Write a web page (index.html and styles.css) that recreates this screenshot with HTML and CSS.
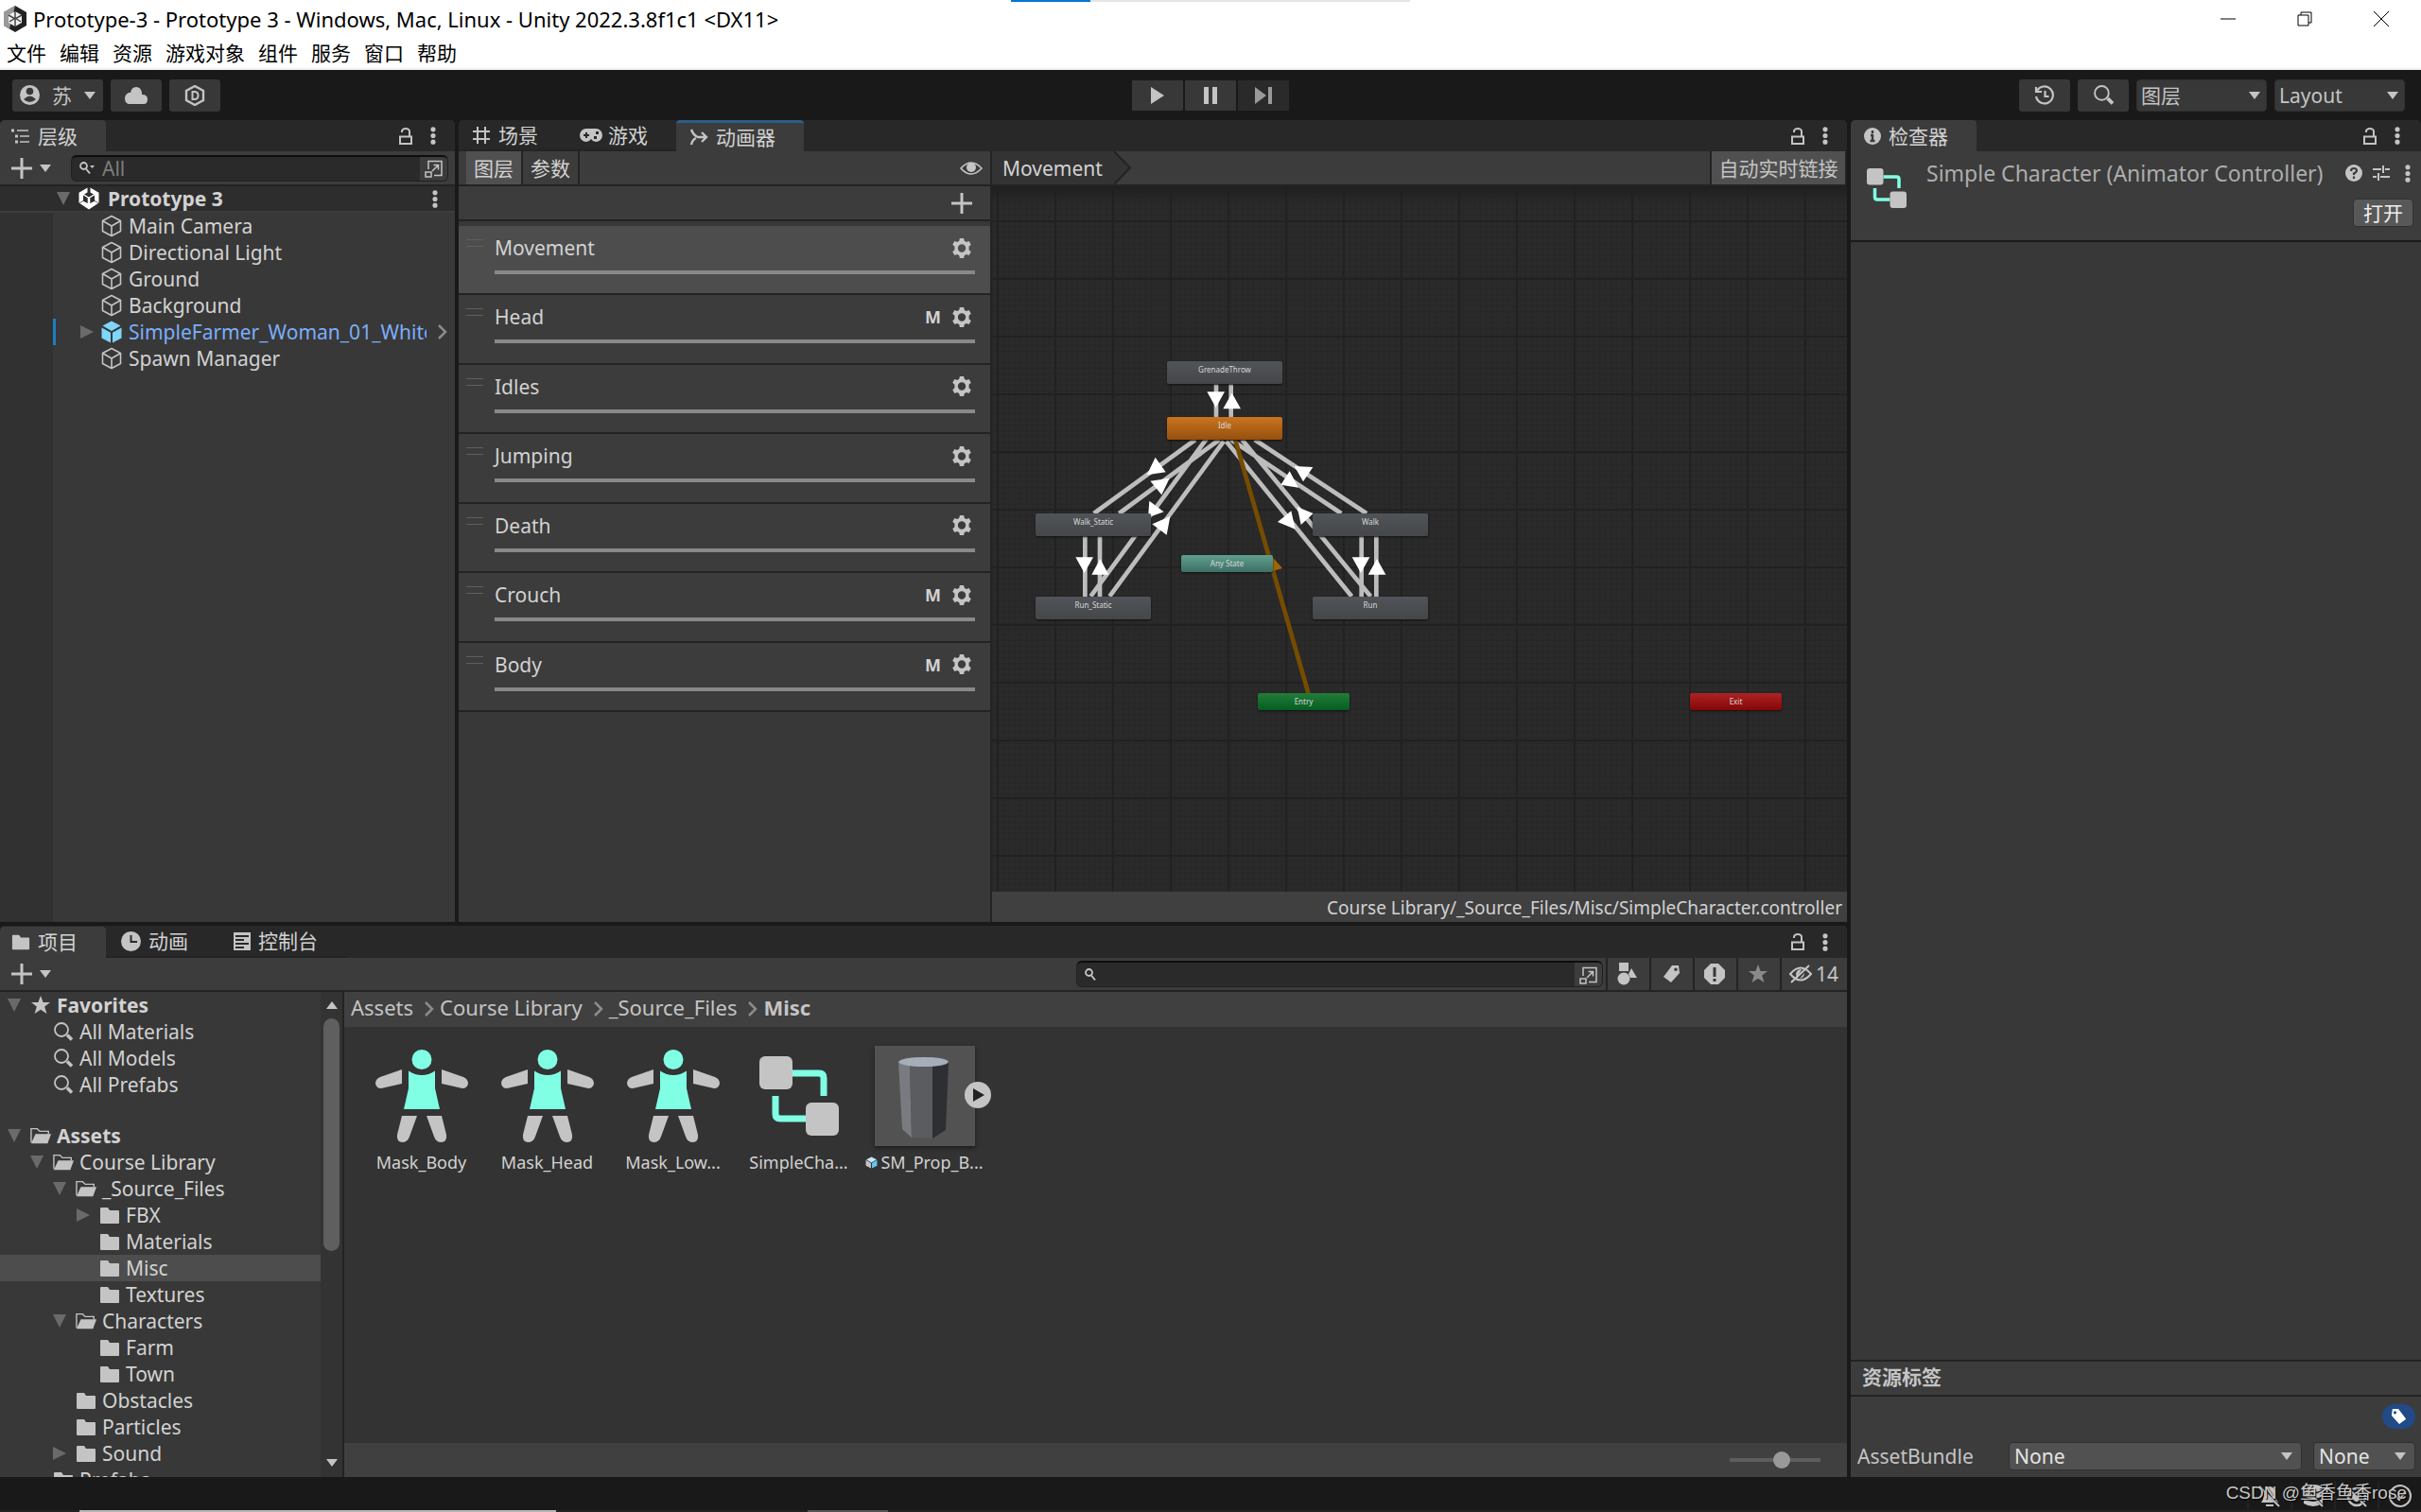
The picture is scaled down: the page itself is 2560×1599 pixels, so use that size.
FILE: index.html
```html
<!DOCTYPE html>
<html lang="zh-CN">
<head>
    <meta charset="UTF-8">
    <meta name="viewport" content="width=device-width, initial-scale=1.0">
    <title>Prototype-3 - Prototype 3 - Unity 2022.3.8f1c1</title>
    <link rel="stylesheet" href="styles.css">
</head>
<body>
    <!-- shared icons -->
    <svg class="sprite" aria-hidden="true">
        <symbol id="i-lock" viewBox="0 0 14 18"><path d="M3 5V4a4 3 0 0 1 8 0v5M1 9.500h12v7.500H1z" fill="none" stroke="currentColor" stroke-width="2"/></symbol>
        <symbol id="i-dots" viewBox="0 0 6 20"><circle cx="3" cy="3" r="2.700"/><circle cx="3" cy="10" r="2.700"/><circle cx="3" cy="17" r="2.700"/></symbol>
        <symbol id="i-plus" viewBox="0 0 22 22"><path d="M11 0v22M0 11h22" stroke="currentColor" stroke-width="3"/></symbol>
        <symbol id="i-down" viewBox="0 0 12 8"><path d="M0 0h12L6 8z"/></symbol>
        <symbol id="i-fold" viewBox="0 0 14 14"><path d="M0 0h14L7 14z"/></symbol>
        <symbol id="i-unfold" viewBox="0 0 14 14"><path d="M0 0v14L14 7z"/></symbol>
        <symbol id="i-chev" viewBox="0 0 10 16"><path d="M1 1l7 7-7 7" fill="none" stroke="currentColor" stroke-width="2.500"/></symbol>
        <symbol id="i-search" viewBox="0 0 20 20"><circle cx="8" cy="8" r="7" fill="none" stroke="currentColor" stroke-width="1.800"/><path d="M14 13.500l5 5" stroke="currentColor" stroke-width="3.600"/></symbol>
        <symbol id="i-find" viewBox="0 0 16 14"><circle cx="4.500" cy="4.500" r="3.500" fill="none" stroke="currentColor" stroke-width="1.800"/><path d="M7 7.500l4 5" stroke="currentColor" stroke-width="2"/></symbol>
        <symbol id="i-find-menu" viewBox="0 0 16 14"><circle cx="4.500" cy="4.500" r="3.500" fill="none" stroke="currentColor" stroke-width="1.800"/><path d="M7 7.500l4 5" stroke="currentColor" stroke-width="2"/><path d="M11 4h5l-2.500 3z"/></symbol>
        <symbol id="i-popout" viewBox="0 0 20 20"><path d="M4 11V2.500h14v15H10" fill="none" stroke="currentColor" stroke-width="1.500"/><path d="M1 14h6v5H1zM8 13l6-6M9.500 6.500h5v5" fill="none" stroke="currentColor" stroke-width="1.500"/></symbol>
        <symbol id="i-cube" viewBox="0 0 24 24"><path d="M12 1.500l9.500 5v11L12 22.500l-9.500-5v-11zM2.500 6.500L12 12l9.500-5.500M12 12v10.500" fill="none" stroke="currentColor" stroke-width="1.600" stroke-linejoin="round"/></symbol>
        <symbol id="i-prefab" viewBox="0 0 24 24"><path d="M12 .500l9.500 5L12 11 2.500 5.500zM1.500 7.500l9.500 5.300V23.500l-9.500-5zM22.500 7.500L13 12.800v10.700l9.500-5z"/></symbol>
        <symbol id="i-unity" viewBox="0 0 24 24"><path d="M10.500.500v5L7 7.500l5 3 5-3-3.500-2v-5l9 5.200v11L18 14V8.500l-4.700 2.800v5.700l4.700-2.300 3.800 2.300L12 23.500l-9.800-6.500L6 14.700l4.700 2.300v-5.700L6 8.500V14l-4.500 2.700v-11z"/></symbol>
        <symbol id="i-folder" viewBox="0 0 22 20"><path d="M1 3q0-1 1-1h7l2 3h9q1 0 1 1v12q0 1-1 1H2q-1 0-1-1z"/></symbol>
        <symbol id="i-open" viewBox="0 0 24 20"><path d="M1 18V2h7l3 3h10v3" fill="none" stroke="currentColor" stroke-width="1.500"/><path d="M6 8h18l-4 11H1z"/></symbol>
        <symbol id="i-star" viewBox="0 0 20 20"><path d="M10 0l2.600 7H20l-5.800 4.600L16.400 19 10 14.700 3.600 19l2.200-7.400L0 7h7.400z"/></symbol>
        <symbol id="i-gear" viewBox="0 0 20 20"><path fill-rule="evenodd" d="M8 0h4l.6 2.700 2 1.100 2.700-.900 2 3.500-2.100 1.900v3.400l2.100 1.900-2 3.500-2.700-.900-2 1.100L12 20H8l-.6-2.700-2-1.100-2.700.9-2-3.500 2.100-1.900V8.300L.7 6.400l2-3.500 2.700.9 2-1.100zM10 6a4 4 0 1 0 0 8 4 4 0 0 0 0-8z"/></symbol>
        <symbol id="i-controller" viewBox="0 0 84 84"><path d="M35 18h28q5 0 5 5v19M17 42v19q0 5 5 5h27" fill="none" stroke="#80ffe5" stroke-width="7"/><rect width="35" height="35" rx="6"/><rect x="49" y="49" width="35" height="35" rx="6"/></symbol>
        <symbol id="i-mask" viewBox="0 0 98 98"><g fill="#80ffe5"><circle cx="49" cy="10.500" r="10.500"/><path d="M35 22.500q14 9 28 0V41l5 22H30l5-22z"/></g><path d="M28 21v15L6 41q-5 0-6-5 0-5 5-7zM70 21v15l22 5q5 0 6-5 0-5-5-7zM28 70h16l-8 22q-2 6-8 6-6-1-5-8zM70 70H54l8 22q2 6 8 6 6-1 5-8z"/></symbol>
        <symbol id="i-tag" viewBox="0 0 20 20"><path fill-rule="evenodd" d="M11 1h7l1 8-9 10-8-6zM15 3.500a1.800 1.800 0 1 0 0 3.600 1.800 1.800 0 0 0 0-3.600z"/></symbol>
    </svg>

    <header class="titlebar">
        <div class="title">
            <svg class="app-icon" viewBox="0 0 24 28"><path d="M12 0l12 7v14l-12 7L0 21V7z" fill="#222"/><path d="M12 0L0 7v14l6 3.500z" fill="#999"/><path d="M12 6l7 4v8l-7 4-7-4v-8z" fill="#eee"/><path d="M12 6v7l-6 4M12 13l6 4M5 10l7 4 7-4M12 14v8" fill="none" stroke="#444" stroke-width="1.500"/></svg>
            <h1>Prototype-3 - Prototype 3 - Windows, Mac, Linux - Unity 2022.3.8f1c1 &lt;DX11&gt;</h1>
        </div>
        <div class="load-bar"></div>
        <div class="window-buttons">
            <button aria-label="Minimize"><svg viewBox="0 0 16 16"><path d="M0 8h16"/></svg></button>
            <button aria-label="Restore"><svg viewBox="0 0 16 16"><path d="M1 4h11v11H1zM4 4V1h11v11h-3"/></svg></button>
            <button aria-label="Close"><svg viewBox="0 0 16 16"><path d="M0 0l16 16M16 0L0 16"/></svg></button>
        </div>
    </header>
    <nav class="menu">
        <a href="#">文件</a><a href="#">编辑</a><a href="#">资源</a><a href="#">游戏对象</a><a href="#">组件</a><a href="#">服务</a><a href="#">窗口</a><a href="#">帮助</a>
    </nav>

    <div class="toolbar">
        <div class="tools">
            <button class="account"><svg width="21" height="21" viewBox="0 0 21 21"><circle cx="10.500" cy="10.500" r="10.500"/><circle cx="10.500" cy="6.500" r="3.800" fill="#383838"/><path d="M4 15q6.500-7 13 0-6.500 6-13 0z" fill="#383838"/></svg><span>苏</span><svg class="arrow"><use href="#i-down"/></svg></button>
            <button class="tool" aria-label="Cloud"><svg width="24" height="18" viewBox="0 0 24 18"><path d="M4 18q-4-1-4-6 0-4 4-6h2q1-6 6-6t6 6v2q6 0 6 5t-4 5z"/></svg></button>
            <button class="tool" aria-label="DevOps"><svg width="22" height="22" viewBox="0 0 22 22"><path d="M11 1l9 5v10l-9 5-9-5V6z" fill="none" stroke="currentColor" stroke-width="2.400"/><path d="M8.500 7v8h2q4 0 4-4t-4-4z" fill="none" stroke="currentColor" stroke-width="2"/></svg></button>
        </div>
        <div class="play">
            <button aria-label="Play"><svg width="16" height="18" viewBox="0 0 16 18"><path d="M1 0v18l14-9z"/></svg></button>
            <button aria-label="Pause"><svg width="16" height="18" viewBox="0 0 16 18"><path d="M1 0h5v18H1zM10 0h5v18h-5z"/></svg></button>
            <button aria-label="Step" disabled><svg width="18" height="18" viewBox="0 0 18 18"><path d="M0 0v18l12-9zM14 0h4v18h-4z"/></svg></button>
        </div>
        <div class="tools right">
            <button class="tool" aria-label="Undo history"><svg width="22" height="22" viewBox="0 0 22 22"><path d="M3 6a9 9 0 1 1-1 6M2 2v5h6M11.500 6v6h4" fill="none" stroke="currentColor" stroke-width="2.200"/></svg></button>
            <button class="tool" aria-label="Search"><svg width="21" height="21"><use href="#i-search"/></svg></button>
            <div class="select"><select aria-label="图层"><option>图层</option></select></div>
            <div class="select"><select aria-label="Layout"><option>Layout</option></select></div>
        </div>
    </div>

    <main class="dock">
        <div class="dock-left">
            <div class="dock-top">
                <section class="panel hierarchy">
                    <div class="tabs">
                        <div class="tab active first"><svg width="20" height="16" viewBox="0 0 20 16"><path d="M0 2h3M4 8h3M4 14h3" stroke="currentColor" stroke-width="3"/><path d="M6 2h12M9 8h10M9 14h10" stroke="currentColor" stroke-width="1.500"/></svg>层级</div>
                        <svg class="lock"><use href="#i-lock"/></svg><svg class="dots"><use href="#i-dots"/></svg>
                    </div>
                    <div class="bar">
                        <button class="add" aria-label="Create"><svg class="plus"><use href="#i-plus"/></svg><svg class="arrow"><use href="#i-down"/></svg></button>
                        <label class="search"><svg class="find"><use href="#i-find-menu"/></svg><input type="text" placeholder="All" aria-label="Search hierarchy"><span class="popout"><svg width="20" height="20"><use href="#i-popout"/></svg></span></label>
                    </div>
                    <div class="scene"><svg class="fold"><use href="#i-fold"/></svg><svg class="cube"><use href="#i-unity"/></svg><b>Prototype 3</b><svg class="dots"><use href="#i-dots"/></svg></div>
                    <ul class="objects">
                        <li><svg class="cube"><use href="#i-cube"/></svg><span>Main Camera</span></li>
                        <li><svg class="cube"><use href="#i-cube"/></svg><span>Directional Light</span></li>
                        <li><svg class="cube"><use href="#i-cube"/></svg><span>Ground</span></li>
                        <li><svg class="cube"><use href="#i-cube"/></svg><span>Background</span></li>
                        <li class="prefab"><svg class="fold"><use href="#i-unfold"/></svg><svg class="cube"><use href="#i-prefab"/></svg><span>SimpleFarmer_Woman_01_White</span><svg class="chev"><use href="#i-chev"/></svg></li>
                        <li><svg class="cube"><use href="#i-cube"/></svg><span>Spawn Manager</span></li>
                    </ul>
                </section>

                <section class="panel animator">
                    <div class="tabs">
                        <div class="tab"><svg width="20" height="20" viewBox="0 0 20 20"><path d="M6 1v18M14 1v18M1 6h18M1 14h18" stroke="currentColor" stroke-width="2"/></svg>场景</div>
                        <div class="tab pad"><svg width="24" height="14" viewBox="0 0 24 14"><path fill-rule="evenodd" d="M7 0h10a7 7 0 0 1 0 14q-3 0-5-3-2 3-5 3A7 7 0 0 1 7 0zM6 4v2H4v2h2v2h2V8h2V6H8V4zM17 3v3h3V3zM15 8v3h3V8z"/></svg>游戏</div>
                        <div class="tab active focused"><svg width="20" height="18" viewBox="0 0 20 18"><path d="M2 1q2 6 7 8h9M2 17q1-5 5-7M13 4l5 5-5 5" fill="none" stroke="currentColor" stroke-width="2.400"/></svg>动画器</div>
                        <svg class="lock"><use href="#i-lock"/></svg><svg class="dots"><use href="#i-dots"/></svg>
                    </div>
                    <div class="animator-body">
                        <div class="layers">
                            <div class="bar layer-bar">
                                <button class="on">图层</button><button>参数</button>
                                <svg class="eye" width="24" height="14" viewBox="0 0 24 14"><path d="M1 7q11-12 22 0-11 12-22 0z" fill="none" stroke="currentColor" stroke-width="1.600"/><circle cx="12" cy="6" r="5"/></svg>
                            </div>
                            <div class="layer-add"><button aria-label="Add layer"><svg class="plus"><use href="#i-plus"/></svg></button></div>
                            <ul class="layer-list">
                                <li class="selected"><i></i><span>Movement</span><svg class="gear"><use href="#i-gear"/></svg><hr></li>
                                <li><i></i><span>Head</span><b>M</b><svg class="gear"><use href="#i-gear"/></svg><hr></li>
                                <li><i></i><span>Idles</span><svg class="gear"><use href="#i-gear"/></svg><hr></li>
                                <li><i></i><span>Jumping</span><svg class="gear"><use href="#i-gear"/></svg><hr></li>
                                <li><i></i><span>Death</span><svg class="gear"><use href="#i-gear"/></svg><hr></li>
                                <li><i></i><span>Crouch</span><b>M</b><svg class="gear"><use href="#i-gear"/></svg><hr></li>
                                <li><i></i><span>Body</span><b>M</b><svg class="gear"><use href="#i-gear"/></svg><hr></li>
                            </ul>
                        </div>
                        <div class="graph-pane">
                            <div class="bar crumb-bar">
                                <div class="crumb">Movement</div>
                                <svg class="crumb-tip" width="19" height="35" viewBox="0 0 19 35"><path d="M0 0l17 17.500L0 35z" fill="#333"/><path d="M0 0l17 17.500L0 35" fill="none" stroke="#222" stroke-width="2"/></svg>
                                <button class="live">自动实时链接</button>
                            </div>
                            <div class="graph">
                                <!-- transitions, three units per pixel -->
                                <svg class="edges" width="904" height="747" viewBox="27 -429 2712 2241">
                                    <g stroke="#bdbdbd" stroke-width="14">
                                        <path d="M738 190V310M785 190V310M322 670V880M369 670V880M1199 670V880M1246 670V880"/>
                                        <path d="M672 375L350 609M748 375L430 609M709 370L340 872M762 380L400 872"/>
                                        <path d="M860 375L1215 609M785 375L1135 609M820 375L1228 872M770 380L1168 872"/>
                                    </g>
                                    <path d="M797 370L1032 1185" stroke="#764c00" stroke-width="14"/>
                                    <path d="M709 223h56l-28 50zM760 277h56l-28-50z" fill="#fff"/>
                                    <path d="M545 431l33 47-60 9zM529 506l61-9-25 53zM526 569l46 35-50 18zM535 643l57-25-11 59z" fill="#fff"/>
                                    <path d="M986 459l59 3-31 46zM971 475l28 52-56-9zM976 601l13 58-56-23zM995 588l51 21-39 36z" fill="#fff"/>
                                    <path d="M292 748h56l-28 50zM343 803h54l-27-50zM1169 748h56l-28 50zM1220 803h56l-28-50z" fill="#fff"/>
                                    <path d="M917 748l31 35-57 16z" fill="#a06800"/>
                                </svg>
                                <div class="node grenade">GrenadeThrow</div>
                                <div class="node idle">Idle</div>
                                <div class="node walk-static">Walk_Static</div>
                                <div class="node run-static">Run_Static</div>
                                <div class="node walk">Walk</div>
                                <div class="node run">Run</div>
                                <div class="node small any">Any State</div>
                                <div class="node small entry">Entry</div>
                                <div class="node small exit">Exit</div>
                            </div>
                            <div class="graph-path">Course Library/_Source_Files/Misc/SimpleCharacter.controller</div>
                        </div>
                    </div>
                </section>
            </div>

            <section class="panel project">
                <div class="tabs">
                    <div class="tab active first"><svg width="20" height="20"><use href="#i-folder"/></svg>项目</div>
                    <div class="tab"><svg width="21" height="21" viewBox="0 0 21 21"><circle cx="10.500" cy="10.500" r="10.500"/><path d="M10.500 4v7H17" fill="none" stroke="#282828" stroke-width="2"/></svg>动画</div>
                    <div class="tab"><svg width="18" height="19" viewBox="0 0 18 19"><path d="M0 0h18v19H0z"/><path d="M2 4h14M2 8h9M2 12h14M2 16h9" stroke="#282828" stroke-width="2"/></svg>控制台</div>
                    <svg class="lock"><use href="#i-lock"/></svg><svg class="dots"><use href="#i-dots"/></svg>
                </div>
                <div class="bar">
                    <button class="add" aria-label="Create"><svg class="plus"><use href="#i-plus"/></svg><svg class="arrow"><use href="#i-down"/></svg></button>
                    <label class="search"><svg class="find"><use href="#i-find"/></svg><input type="text" aria-label="Search project"><span class="popout"><svg width="20" height="20"><use href="#i-popout"/></svg></span></label>
                    <div class="filters">
                        <button aria-label="Search by type"><svg width="22" height="24" viewBox="0 0 22 24"><path d="M2 0h10v9H2zM15 6l6 10h-7l-2-4z"/><circle cx="7" cy="17" r="6.500"/></svg></button>
                        <button aria-label="Search by label"><svg width="20" height="20"><use href="#i-tag"/></svg></button>
                        <button aria-label="Search by import log"><svg width="22" height="22" viewBox="0 0 22 22"><path d="M7 0h8l7 7v8l-7 7H7l-7-7V7z"/><path d="M11 4v10M11 16v3" stroke="#383838" stroke-width="3"/></svg></button>
                        <button class="dim" aria-label="Save search"><svg width="20" height="20"><use href="#i-star"/></svg></button>
                        <button class="hidden-count"><svg width="26" height="20" viewBox="0 0 26 20"><path d="M2 10q11-13 22 0-11 13-22 0zM3 19L22 1" fill="none" stroke="currentColor" stroke-width="2"/><path d="M8 10q1-5 6-5l-5 9zM17 9q0 5-5 6z"/></svg>14</button>
                    </div>
                </div>
                <div class="browser">
                    <div class="tree">
                        <ul>
                            <li><svg class="fold"><use href="#i-fold"/></svg><svg class="ico"><use href="#i-star"/></svg><b>Favorites</b></li>
                            <li class="d1"><svg class="ico"><use href="#i-search"/></svg>All Materials</li>
                            <li class="d1"><svg class="ico"><use href="#i-search"/></svg>All Models</li>
                            <li class="d1"><svg class="ico"><use href="#i-search"/></svg>All Prefabs</li>
                        </ul>
                        <ul>
                            <li><svg class="fold"><use href="#i-fold"/></svg><svg class="ico"><use href="#i-open"/></svg><b>Assets</b></li>
                            <li class="d1"><svg class="fold"><use href="#i-fold"/></svg><svg class="ico"><use href="#i-open"/></svg>Course Library</li>
                            <li class="d2"><svg class="fold"><use href="#i-fold"/></svg><svg class="ico"><use href="#i-open"/></svg>_Source_Files</li>
                            <li class="d3"><svg class="fold"><use href="#i-unfold"/></svg><svg class="ico"><use href="#i-folder"/></svg>FBX</li>
                            <li class="d3"><svg class="ico"><use href="#i-folder"/></svg>Materials</li>
                            <li class="d3 selected"><svg class="ico"><use href="#i-folder"/></svg>Misc</li>
                            <li class="d3"><svg class="ico"><use href="#i-folder"/></svg>Textures</li>
                            <li class="d2"><svg class="fold"><use href="#i-fold"/></svg><svg class="ico"><use href="#i-open"/></svg>Characters</li>
                            <li class="d3"><svg class="ico"><use href="#i-folder"/></svg>Farm</li>
                            <li class="d3"><svg class="ico"><use href="#i-folder"/></svg>Town</li>
                            <li class="d2"><svg class="ico"><use href="#i-folder"/></svg>Obstacles</li>
                            <li class="d2"><svg class="ico"><use href="#i-folder"/></svg>Particles</li>
                            <li class="d2"><svg class="fold"><use href="#i-unfold"/></svg><svg class="ico"><use href="#i-folder"/></svg>Sound</li>
                            <li class="d1"><svg class="ico"><use href="#i-folder"/></svg>Prefabs</li>
                        </ul>
                    </div>
                    <div class="scrollbar"><svg class="arrow up"><use href="#i-down"/></svg><div class="thumb"></div><svg class="arrow"><use href="#i-down"/></svg></div>
                    <div class="content">
                        <nav class="path"><a href="#">Assets</a><svg class="chev"><use href="#i-chev"/></svg><a href="#">Course Library</a><svg class="chev"><use href="#i-chev"/></svg><a href="#">_Source_Files</a><svg class="chev"><use href="#i-chev"/></svg><b>Misc</b></nav>
                        <div class="assets">
                            <figure><div class="thumb-box"><svg width="98" height="98"><use href="#i-mask"/></svg></div><figcaption>Mask_Body</figcaption></figure>
                            <figure><div class="thumb-box"><svg width="98" height="98"><use href="#i-mask"/></svg></div><figcaption>Mask_Head</figcaption></figure>
                            <figure><div class="thumb-box"><svg width="98" height="98"><use href="#i-mask"/></svg></div><figcaption>Mask_Low...</figcaption></figure>
                            <figure><div class="thumb-box"><svg width="84" height="84"><use href="#i-controller"/></svg></div><figcaption>SimpleCha...</figcaption></figure>
                            <figure>
                                <div class="thumb-box preview"><svg width="106" height="106" viewBox="0 0 106 106"><path d="M25 17l12 4 2 76-10-9z" fill="#797b80"/><path d="M37 21h24v77l-22-1z" fill="#5a5c5f"/><path d="M61 21l17-4-3 72-14 9z" fill="#2d2f33"/><path d="M25 17q4-5 27-5t26 5q-3 5-26 5t-27-5z" fill="#a6aebb"/></svg>
                                    <button class="expand" aria-label="Expand"><svg width="12" height="14" viewBox="0 0 12 14"><path d="M0 0v14l12-7z"/></svg></button></div>
                                <figcaption><svg width="13" height="13" viewBox="0 0 24 24"><path d="M12 1l10 5-10 6L2 6z" fill="#bfe9ff"/><path d="M1 7l10 6v10L1 18z" fill="#c4c4c4"/><path d="M23 7l-10 6v10l10-5z" fill="#63c8f5"/></svg>SM_Prop_B...</figcaption>
                            </figure>
                        </div>
                        <div class="content-foot"><input type="range" min="0" max="100" value="59" aria-label="Icon size"></div>
                    </div>
                </div>
            </section>
        </div>

        <aside class="panel inspector">
            <div class="tabs">
                <div class="tab active"><svg width="18" height="18" viewBox="0 0 18 18"><circle cx="9" cy="9" r="9"/><path d="M9 3v3M7 8h2v6M6.500 14h5" fill="none" stroke="#3c3c3c" stroke-width="2.400"/></svg>检查器</div>
                <svg class="lock"><use href="#i-lock"/></svg><svg class="dots"><use href="#i-dots"/></svg>
            </div>
            <div class="inspector-head">
                <svg class="asset-icon" width="42" height="42"><use href="#i-controller"/></svg>
                <div class="head-main">
                    <div class="head-row">
                        <h2>Simple Character (Animator Controller)</h2>
                        <svg width="18" height="18" viewBox="0 0 18 18"><circle cx="9" cy="9" r="9"/><path d="M6 7q0-3 3-3t3 2.500q0 1.500-3 3V11M9 12.500V15" fill="none" stroke="#3c3c3c" stroke-width="2.200"/></svg>
                        <svg width="18" height="18" viewBox="0 0 18 18"><path d="M0 5h9M13 5h5M0 13h4M8 13h10M11 1v8M6 9v8" stroke="currentColor" stroke-width="2"/></svg>
                        <svg class="dots"><use href="#i-dots"/></svg>
                    </div>
                    <button class="open">打开</button>
                </div>
            </div>
            <div class="inspector-space"></div>
            <h3>资源标签</h3>
            <div class="labels">
                <button class="label-tag" aria-label="Labels"><svg width="18" height="18"><use href="#i-tag"/></svg></button>
                <div class="bundle">
                    <label for="bundle">AssetBundle</label>
                    <div class="select wide"><select id="bundle"><option>None</option></select></div>
                    <div class="select"><select aria-label="Variant"><option>None</option></select></div>
                </div>
            </div>
        </aside>
    </main>

    <footer class="status">
        <div class="status-icons">
            <span><svg viewBox="0 0 24 24"><path d="M3 19q3-4 3-10 1-7 6-7t6 7q0 6 3 10zM8 21h8v2H8z"/><path d="M3 2l19 21" stroke="#191919" stroke-width="3"/><path d="M1 2l21 21" stroke="currentColor" stroke-width="2"/></svg></span>
            <span><svg viewBox="0 0 24 24"><ellipse cx="12" cy="4" rx="10" ry="4"/><path d="M2 7q10 6 20 0v5q-10 6-20 0zM2 15q10 6 20 0v5q-10 6-20 0z"/><path d="M3 2l19 21" stroke="#191919" stroke-width="3"/><path d="M1 2l21 21" stroke="currentColor" stroke-width="2"/></svg></span>
            <span><svg viewBox="0 0 24 24"><circle cx="12" cy="13" r="9" fill="none" stroke="currentColor" stroke-width="2.500"/><circle cx="12" cy="13" r="5"/><path d="M3 2l19 21" stroke="#191919" stroke-width="3"/><path d="M1 2l21 21" stroke="currentColor" stroke-width="2"/></svg></span>
            <span><svg viewBox="0 0 24 24"><circle cx="12" cy="12" r="11" fill="none" stroke="currentColor" stroke-width="2"/><path d="M7 12l4 4 6-8" fill="none" stroke="currentColor" stroke-width="2"/></svg></span>
        </div>
        <div class="watermark">CSDN @鱼香鱼香rose</div>
        <div class="taskbar"><span></span><span></span></div>
    </footer>
</body>
</html>
```

FILE: styles.css
```css
* {
    box-sizing: border-box;
}
body {
    margin: 0;
    height: 100vh;
    display: flex;
    flex-direction: column;
    overflow: hidden;
    background: #191919;
    color: #d2d2d2;
    font: 21px/28px "Noto Sans", "Noto Sans CJK SC", sans-serif;
}
button, input, select {
    margin: 0;
    padding: 0;
    border: 0;
    background: none;
    color: inherit;
    font: inherit;
}
ul, figure, h1, h2, h3 {
    margin: 0;
    padding: 0;
    list-style: none;
    font: inherit;
}
a {
    color: inherit;
    text-decoration: none;
}
svg {
    display: block;
    flex: none;
    fill: currentColor;
    color: #c4c4c4;
}
.sprite {
    position: absolute;
    width: 0;
    height: 0;
}

/* window frame */
.titlebar {
    position: relative;
    flex: none;
    height: 40px;
    display: flex;
    justify-content: space-between;
    background: #fff;
    color: #000;
}
.title {
    display: flex;
    align-items: center;
    gap: 7px;
    padding-left: 4px;
}
.title h1 {
    font-size: 22px;
}
.app-icon {
    width: 24px;
    height: 28px;
}
.load-bar {
    position: absolute;
    top: 0;
    left: 1069px;
    width: 422px;
    height: 2px;
    background: linear-gradient(90deg, #0078d7 84px, #e5e5e5 84px);
}
.window-buttons {
    display: flex;
    padding-right: 2px;
}
.window-buttons button {
    width: 81px;
    display: flex;
    align-items: center;
    justify-content: center;
}
.window-buttons svg {
    width: 16px;
    height: 16px;
    fill: none;
    stroke: #000;
}
.menu {
    flex: none;
    height: 34px;
    display: flex;
    gap: 14px;
    padding: 2px 0 0 7px;
    background: #fff;
    border-bottom: 2px solid #f0f0f0;
    color: #000;
}

/* main toolbar */
.toolbar {
    flex: none;
    height: 53px;
    display: grid;
    grid-template-columns: 1fr auto 1fr;
    align-items: center;
}
.tools, .play {
    display: flex;
    gap: 8px;
}
.tools {
    padding-left: 13px;
}
.tools.right {
    justify-content: flex-end;
    padding-right: 17px;
}
.play {
    gap: 2px;
}
.toolbar button {
    height: 34px;
    display: flex;
    align-items: center;
    justify-content: center;
    background: #383838;
    border-radius: 3px;
}
.toolbar .tool {
    width: 54px;
}
.toolbar .account {
    width: 96px;
    gap: 13px;
    color: #c4c4c4;
}
.toolbar .play button {
    width: 54px;
    height: 32px;
    border-radius: 1px;
}
.toolbar .play button:disabled {
    background: #2a2a2a;
}
.play button:disabled svg {
    color: #999;
}
.arrow {
    width: 12px;
    height: 8px;
}
.select {
    position: relative;
}
.select::after {
    content: "";
    position: absolute;
    top: 13px;
    right: 7px;
    border: 6px solid transparent;
    border-top: 8px solid #c4c4c4;
    border-bottom: 0;
    pointer-events: none;
}
.select select {
    appearance: none;
    width: 100%;
    height: 30px;
    padding: 0 5px;
    background: #515151;
    border: 1px solid #303030;
    border-radius: 4px;
    color: #e4e4e4;
}
.toolbar .select {
    width: 138px;
}
.toolbar .select select {
    height: 34px;
    padding: 0 4px;
    background: #383838;
    border-color: #303030;
    color: #c4c4c4;
}

/* docking */
.dock {
    flex: 1;
    min-height: 0;
    display: grid;
    grid-template-columns: minmax(0, 1fr) 603px;
    grid-template-rows: minmax(0, 1fr);
    gap: 4px;
}
.dock-left {
    display: grid;
    grid-template-rows: minmax(0, 848fr) minmax(0, 583fr);
    gap: 4px;
}
.dock-top {
    display: grid;
    grid-template-columns: 481px minmax(0, 1fr);
    gap: 4px;
}
.panel {
    display: flex;
    flex-direction: column;
    min-height: 0;
    overflow: hidden;
    background: #383838;
    border-radius: 5px 5px 0 0;
}
.tabs {
    flex: none;
    height: 33px;
    display: flex;
    align-items: center;
    background: #282828;
}
.tab {
    height: 33px;
    display: flex;
    align-items: center;
    gap: 8px;
    padding: 0 30px 0 14px;
    border-bottom: 2px solid #232323;
}
.project .tab {
    padding: 0 32px 0 16px;
}
.tabs .tab.first {
    padding: 0 30px 0 12px;
}
.tab.pad {
    gap: 6px;
}
.tab.active {
    background: #3c3c3c;
    border-bottom: 0;
    border-radius: 4px 4px 0 0;
}
.tab.focused {
    border-top: 3px solid #2c5d87;
}
.lock {
    width: 14px;
    height: 18px;
    margin-left: auto;
}
.dots {
    width: 6px;
    height: 19px;
}
.tabs .dots {
    margin: 0 20px 0 19px;
}
.inspector .tabs .dots {
    margin-right: 22px;
}
.bar {
    flex: none;
    height: 37px;
    display: flex;
    align-items: center;
    background: #3c3c3c;
    border-bottom: 2px solid #232323;
}
.add {
    display: flex;
    align-items: center;
    gap: 8px;
    padding-left: 12px;
}
.plus {
    width: 22px;
    height: 22px;
}
.search {
    flex: 1;
    height: 28px;
    display: flex;
    align-items: center;
    overflow: hidden;
    background: #2a2a2a;
    border: 1px solid #212121;
    border-top: 2px solid #0d0d0d;
    border-radius: 6px;
}
.hierarchy .search {
    margin: 0 7px 0 21px;
}
.find {
    width: 16px;
    height: 14px;
    margin-left: 8px;
}
.search input {
    flex: 1;
    min-width: 0;
    height: 24px;
    padding-left: 8px;
    outline: 0;
}
.search input::placeholder {
    color: #7d7d7d;
}
.popout {
    width: 29px;
    height: 26px;
    display: grid;
    place-items: center;
    background: #3c3c3c;
}

/* hierarchy */
.scene, .objects li {
    height: 28px;
    display: flex;
    align-items: center;
}
.scene {
    flex: none;
    padding: 0 18px 0 60px;
    background: #2d2d2d;
    border-bottom: 2px solid #3c3c3c;
}
.scene .dots {
    margin-left: auto;
}
.scene b {
    margin-left: 8px;
}
.fold {
    width: 14px;
    height: 14px;
    color: #6a6a6a;
}
.cube {
    width: 24px;
    height: 24px;
}
.scene .cube {
    margin-left: 8px;
    color: #fff;
}
.objects {
    flex: 1;
    background: linear-gradient(90deg, #313131 56px, #383838 56px);
}
.objects li {
    padding-left: 106px;
}
.objects li span {
    flex: 1;
    margin: 0 28px 0 6px;
    overflow: hidden;
    white-space: nowrap;
}
.objects .prefab {
    margin-left: 56px;
    padding-left: 26px;
    border-left: 3px solid #1b7fc0;
    color: #7baefa;
}
.prefab .cube {
    margin-left: 7px;
    color: #7fd6fd;
}
.objects .prefab span {
    margin-right: 12px;
}
.chev {
    width: 10px;
    height: 16px;
    color: #8c8c8c;
}
.prefab .chev {
    margin-right: 8px;
}

/* animator */
.animator-body {
    flex: 1;
    min-height: 0;
    display: grid;
    grid-template-columns: 564px minmax(0, 1fr);
}
.layers {
    border-right: 2px solid #232323;
}
.layer-bar {
    padding-left: 8px;
}
.layer-bar button {
    width: 60px;
    height: 35px;
    border-right: 2px solid #232323;
    line-height: 26px;
}
.layer-bar .on {
    background: #505050;
}
.eye {
    margin: 0 8px 0 auto;
}
.layer-add {
    height: 37px;
    display: flex;
    align-items: center;
    justify-content: flex-end;
    padding-right: 19px;
    background: #3c3c3c;
    border-bottom: 2px solid #232323;
}
.layer-list {
    height: 519px;
    padding-top: 5px;
    display: grid;
    grid-auto-rows: 1fr;
}
.layer-list li {
    display: flex;
    flex-wrap: wrap;
    align-items: center;
    align-content: flex-start;
    padding: 9px 16px 0 8px;
    background: #3c3c3c;
    border-bottom: 2px solid #232323;
}
.layer-list .selected {
    background: #4d4d4d;
}
.layer-list i {
    width: 18px;
    height: 8px;
    margin-top: -10px;
    border: solid #5e5e5e;
    border-width: 1px 0;
}
.layer-list span {
    flex: 1;
    margin-left: 12px;
}
.layer-list b {
    margin-right: 11px;
    font-size: 18px;
}
.gear {
    width: 22px;
    height: 21px;
    margin-right: 3px;
}
.layer-list hr {
    flex: 0 0 508px;
    height: 4px;
    margin: 10px 0 0 30px;
    border: 0;
    background: #898989;
}
.graph-pane {
    display: flex;
    flex-direction: column;
    min-height: 0;
}
.crumb {
    height: 35px;
    padding: 4px 12px 0 11px;
    background: #333;
}
.live {
    width: 145px;
    height: 35px;
    margin-left: auto;
    background: #505050;
    border: solid #232323;
    border-width: 0 2px;
    color: #c4c4c4;
    line-height: 26px;
}
.graph {
    position: relative;
    flex: 1;
    min-height: 0;
    overflow: hidden;
    background:
        linear-gradient(#1f1f1f, transparent 18px),
        linear-gradient(#212121 2px, transparent 2px) 0 36px / 61px 61px,
        linear-gradient(90deg, #212121 2px, transparent 2px) 5px 0 / 61px 61px,
        linear-gradient(#272727 1px, transparent 1px) 0 0 / 6px 6px,
        linear-gradient(90deg, #272727 1px, transparent 1px) 0 0 / 6px 6px,
        #2a2a2a;
}
.edges {
    position: absolute;
    top: 0;
    left: 0;
}
.node {
    position: absolute;
    width: 122px;
    height: 24px;
    background: linear-gradient(#505458, #454649);
    border-radius: 2px;
    box-shadow: 0 1px 2px #111;
    color: #d8d8d8;
    font-size: 8px;
    line-height: 18px;
    text-align: center;
}
.node.small {
    width: 97px;
    height: 18px;
}
.grenade { left: 185px; top: 185px; }
.idle { left: 185px; top: 244px; background: linear-gradient(#cb7420, #96500d); }
.walk-static { left: 46px; top: 346px; }
.run-static { left: 46px; top: 434px; }
.walk { left: 339px; top: 346px; }
.run { left: 339px; top: 434px; }
.any { left: 200px; top: 390px; background: linear-gradient(#5da08c, #3e6f66); }
.entry { left: 281px; top: 536px; background: linear-gradient(#237c3a, #045e20); }
.exit { left: 738px; top: 536px; background: linear-gradient(#ac2424, #850606); }
.graph-path {
    flex: none;
    height: 32px;
    padding-right: 5px;
    background: #404040;
    font-size: 19px;
    line-height: 34px;
    text-align: right;
}

/* project */
.project .tabs {
    height: 34px;
}
.project .bar {
    height: 36px;
}
.project .search {
    flex: 0 0 557px;
    margin: 0 3px 0 auto;
}
.filters {
    height: 34px;
    display: flex;
}
.filters button {
    width: 46px;
    display: flex;
    align-items: center;
    justify-content: center;
    padding-right: 2px;
    border-left: 2px solid #232323;
    color: #c4c4c4;
}
.filters .dim svg {
    color: #8a8a8a;
}
.filters .hidden-count {
    width: 71px;
    gap: 3px;
}
.browser {
    flex: 1;
    min-height: 0;
    display: grid;
    grid-template-columns: 339px 25px minmax(0, 1fr);
}
.tree {
    overflow: hidden;
}
.tree ul + ul {
    margin-top: 26px;
}
.tree li {
    height: 28px;
    display: flex;
    align-items: center;
    gap: 6px;
    padding-left: 32px;
    white-space: nowrap;
}
.tree li.d1 { padding-left: 56px; }
.tree li.d2 { padding-left: 80px; }
.tree li.d3 { padding-left: 105px; }
.tree .selected {
    background: #4d4d4d;
}
.tree .fold {
    margin: 0 4px 0 -24px;
}
.tree .ico {
    width: 22px;
    height: 20px;
}
.scrollbar {
    min-height: 0;
    display: flex;
    flex-direction: column;
    align-items: center;
    padding: 10px 0 11px;
    background: #333;
    border-right: 2px solid #232323;
}
.scrollbar .up {
    transform: rotate(180deg);
}
.scrollbar .thumb {
    width: 17px;
    height: 246px;
    margin: 10px 0 auto;
    background: #5f5f5f;
    border-radius: 9px;
}
.content {
    display: flex;
    flex-direction: column;
    background: #333;
}
.path {
    height: 37px;
    display: flex;
    align-items: center;
    padding: 0 0 6px 7px;
    background: #404040;
    color: #c4c4c4;
    font-size: 22px;
}
.path .chev {
    margin: 4px 6px 0 12px;
}
.assets {
    flex: 1;
    display: flex;
    padding: 20px 0 0 15px;
}
.assets figure {
    width: 133px;
}
.thumb-box {
    position: relative;
    width: 106px;
    height: 106px;
    margin: 0 auto;
    display: grid;
    place-items: center;
}
.preview {
    background: #525252;
    box-shadow: 0 2px 4px #1c1c1c;
}
.expand {
    position: absolute;
    top: 38px;
    right: -17px;
    width: 28px;
    height: 28px;
    display: grid;
    place-items: center;
    padding-left: 3px;
    background: #c4c4c4;
    border-radius: 50%;
}
.expand svg {
    color: #222;
}
figcaption {
    display: flex;
    align-items: center;
    justify-content: center;
    gap: 3px;
    margin-top: 3px;
    font-size: 18px;
    white-space: nowrap;
}
.content-foot {
    height: 36px;
    display: flex;
    align-items: center;
    justify-content: flex-end;
    padding-right: 28px;
    background: #404040;
}
.content-foot input {
    appearance: none;
    width: 96px;
    height: 4px;
    background: #5e5e5e;
}
.content-foot input::-webkit-slider-thumb {
    appearance: none;
    width: 18px;
    height: 18px;
    background: #999;
    border-radius: 50%;
}

/* inspector */
.inspector-head {
    flex: none;
    height: 96px;
    display: flex;
    gap: 21px;
    padding: 9px 8px 0 17px;
    background: #3c3c3c;
    border-bottom: 2px solid #1a1a1a;
}
.asset-icon {
    margin-top: 9px;
}
.head-main {
    flex: 1;
}
.head-row {
    display: flex;
    align-items: center;
    gap: 11px;
}
.head-row h2 {
    flex: 1;
    white-space: nowrap;
    color: #adadad;
    font-size: 23px;
}
.head-row .dots {
    margin: 0 3px 0 5px;
}
.open {
    display: block;
    width: 64px;
    height: 30px;
    margin: 13px 0 0 auto;
    background: #585858;
    border: 1px solid #303030;
    border-radius: 4px;
    color: #eee;
    line-height: 26px;
}
.inspector-space {
    flex: 1;
}
.inspector h3 {
    height: 39px;
    padding: 2px 12px 0;
    background: #3c3c3c;
    border: solid #232323;
    border-width: 2px 0;
    color: #c4c4c4;
    font-weight: bold;
}
.labels {
    height: 85px;
    padding: 8px 6px 0 7px;
    background: #3c3c3c;
}
.label-tag {
    width: 35px;
    height: 26px;
    display: grid;
    place-items: center;
    margin-left: auto;
    background: #214a87;
    border-radius: 13px;
}
.label-tag svg {
    color: #fff;
    transform: scaleX(-1);
}
.bundle {
    display: flex;
    align-items: center;
    gap: 12px;
    margin-top: 14px;
}
.bundle label {
    width: 148px;
    color: #c4c4c4;
}
.bundle .select {
    width: 108px;
}
.bundle .wide {
    flex: 1;
    width: auto;
}
.bundle .select::after {
    top: 11px;
    right: 10px;
}

/* status bar */
.status {
    position: relative;
    flex: none;
    height: 37px;
}
.status-icons {
    height: 35px;
    display: flex;
    justify-content: flex-end;
    padding: 5px 0 0;
}
.status-icons span {
    width: 46px;
    display: grid;
    place-items: center;
    border-left: 2px solid #222;
}
.status-icons svg {
    width: 24px;
    height: 24px;
}
.watermark {
    position: absolute;
    top: 3px;
    right: 15px;
    color: #c8c8c8;
    font: 19px/28px "Liberation Sans", "Noto Sans CJK SC", sans-serif;
    text-shadow: 1px 1px 1px #000;
}
.taskbar {
    height: 2px;
    display: flex;
    gap: 266px;
    padding-left: 84px;
    background: #222;
}
.taskbar span {
    width: 504px;
    background: #b5b5b5;
}
.taskbar span + span {
    width: 85px;
    background: #555;
}
```
